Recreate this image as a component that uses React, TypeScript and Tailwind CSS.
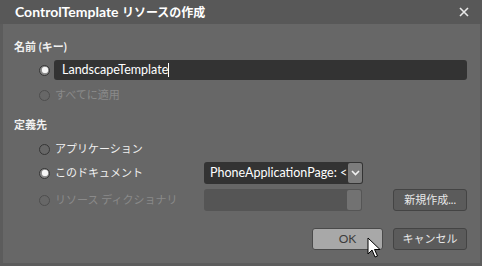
import React from "react";

const font = { fontFamily: 'Lato, "Noto Sans CJK JP", sans-serif' };

function Radio({ checked, disabled }: { checked?: boolean; disabled?: boolean }) {
  return (
    <div
      className={`w-[11px] h-[11px] rounded-full border flex items-center justify-center shrink-0 ${
        disabled ? "border-[#4e4e4e]" : "border-[#363636]"
      } ${checked ? "bg-[#858585]" : ""}`}
    >
      {checked && <div className="w-[6px] h-[6px] rounded-full bg-[#f6f6f6] shadow-[0_0_1px_#ffffff]" />}
    </div>
  );
}

export default function App() {
  return (
    <div className="w-[482px] h-[266px] flex flex-col bg-[#676767] text-[12px] text-[#f0f0f0]" style={font}>
      <div className="h-[24px] shrink-0 bg-[#585858] flex items-center justify-between pl-[15px] pr-[13px]">
        <span className="font-bold text-[14px] text-white leading-none">
          ControlTemplate <span className="text-[12px]">リソースの作成</span>
        </span>
        <svg width="10" height="10" viewBox="0 0 10 10">
          <path d="M1 1 L9 9 M9 1 L1 9" stroke="#e8e8e8" strokeWidth="1.6" />
        </svg>
      </div>
      <div className="flex-1 flex flex-col border-l-[3px] border-r-[2px] border-b-[3px] border-[#5c5c5c] pl-[11px] pr-[13px] pt-[15px]">
        <div className="font-bold leading-[16px] h-[16px] text-[11px]">名前 (キー)</div>
        <div className="flex items-center mt-[5px] h-[20px]">
          <div className="ml-[25px] mr-[4px]"><Radio checked /></div>
          <div className="flex-1 h-[20px] bg-[#333333] rounded-[3px] flex items-center pl-[8px] text-white text-[12.5px]">
            LandscapeTemplate<span className="w-px h-[14px] bg-white" />
          </div>
        </div>
        <div className="flex items-center mt-[5px] h-[20px] text-[#8a8a8a] text-[11px]">
          <div className="ml-[25px] mr-[5px]"><Radio disabled /></div>
          すべてに適用
        </div>
        <div className="font-bold leading-[16px] h-[16px] mt-[12px] text-[11px]">定義先</div>
        <div className="flex items-center mt-[6px] h-[20px] text-[11px]">
          <div className="ml-[25px] mr-[5px]"><Radio /></div>
          アプリケーション
        </div>
        <div className="flex items-center mt-[3px] h-[22px] text-[11px]">
          <div className="ml-[25px] mr-[5px]"><Radio checked /></div>
          <span className="w-[149px]">このドキュメント</span>
          <div className="w-[159px] h-[22px] bg-[#333333] rounded-[3px] flex items-center justify-between pl-[6px] text-white overflow-hidden text-[12.5px]">
            <span className="whitespace-nowrap">PhoneApplicationPage: &lt;</span>
            <div className="w-[14px] h-[20px] mr-px bg-[#7c7c7c] rounded-[2px] flex items-center justify-center shrink-0">
              <svg width="9" height="6" viewBox="0 0 9 6">
                <path d="M1 1 L4.5 4.5 L8 1" stroke="#f0f0f0" strokeWidth="1.6" fill="none" />
              </svg>
            </div>
          </div>
        </div>
        <div className="flex items-center mt-[5px] h-[22px] text-[11px]">
          <div className="ml-[25px] mr-[5px]"><Radio disabled /></div>
          <span className="w-[149px] text-[#8a8a8a]">リソース ディクショナリ</span>
          <div className="w-[159px] h-[22px] bg-[#555555] rounded-[3px] flex items-center justify-end">
            <div className="w-[14px] h-[20px] mr-px bg-[#727272] rounded-[2px]" />
          </div>
          <div className="ml-[31px] w-[74px] h-[22px] rounded-[3px] border border-[#444444] bg-[#5b5b5b] flex items-center justify-center text-[#e8e8e8]">
            新規作成...
          </div>
        </div>
        <div className="flex justify-end mt-[17px] gap-[10px] relative text-[11px]">
          <div className="w-[71px] h-[22px] rounded-[3px] border border-[#4a4a4a] bg-[#a8a8a8] flex items-center justify-center text-[#3c3c3c] text-[12px]">
            OK
          </div>
          <div className="w-[74px] h-[22px] rounded-[3px] border border-[#444444] bg-[#5b5b5b] flex items-center justify-center text-[#e8e8e8]">
            キャンセル
          </div>
          <svg className="absolute left-[353px] top-[9px]" width="14" height="22" viewBox="0 0 14 22">
            <path d="M1 1 L1 17 L5 13 L8 20 L10.5 19 L7.5 12.5 L13 12.5 Z" fill="#fff" stroke="#000" strokeWidth="1" strokeLinejoin="round" />
          </svg>
        </div>
      </div>
    </div>
  );
}
